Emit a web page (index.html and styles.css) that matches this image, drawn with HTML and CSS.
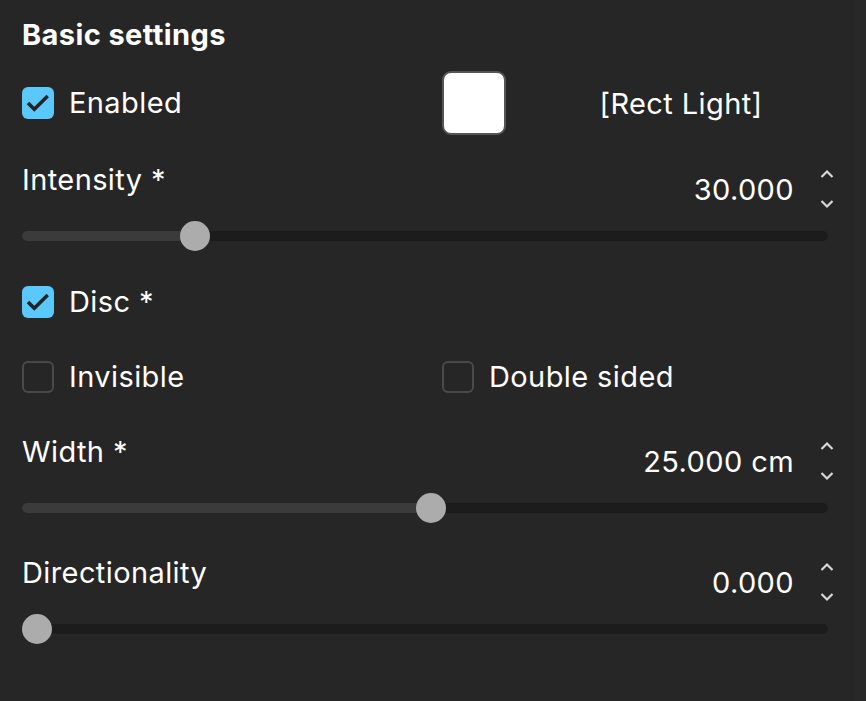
FILE: index.html
```html
<!DOCTYPE html>
<html lang="en">
<head>
    <meta charset="UTF-8">
    <title>Basic settings</title>
    <link rel="stylesheet" href="styles.css">
</head>
<body>
    <div class="panel">
        <h2 class="title">Basic settings</h2>

        <!-- Enabled / colour / name -->
        <div class="grid row-top">
            <label class="check">
                <span class="box checked">
                    <svg viewBox="0 0 32 32"><path d="M6 16 L12.3 22.3 L25.7 9"/></svg>
                </span>
                <span>Enabled</span>
            </label>
            <div class="color-cell">
                <span class="swatch"></span>
                <span class="name">[Rect Light]</span>
            </div>
        </div>

        <!-- Intensity -->
        <div class="prop prop-first">
            <div class="prop-head">
                <span class="prop-label">Intensity *</span>
                <div class="value-group">
                    <span class="value">30.000</span>
                    <span class="spin">
                        <svg viewBox="0 0 14 10"><path d="M1.5 8 L7 2.5 L12.5 8"/></svg>
                        <svg viewBox="0 0 14 10"><path d="M1.5 2 L7 7.5 L12.5 2"/></svg>
                    </span>
                </div>
            </div>
            <div class="slider" style="--v: 0.204">
                <div class="track"><div class="fill"></div></div>
                <div class="thumb"></div>
            </div>
        </div>

        <!-- Disc -->
        <div class="check-row row-disc">
            <label class="check">
                <span class="box checked">
                    <svg viewBox="0 0 32 32"><path d="M6 16 L12.3 22.3 L25.7 9"/></svg>
                </span>
                <span>Disc *</span>
            </label>
        </div>

        <!-- Invisible / Double sided -->
        <div class="grid check-row row-flags">
            <label class="check">
                <span class="box"></span>
                <span>Invisible</span>
            </label>
            <label class="check">
                <span class="box"></span>
                <span>Double sided</span>
            </label>
        </div>

        <!-- Width -->
        <div class="prop prop-width">
            <div class="prop-head">
                <span class="prop-label">Width *</span>
                <div class="value-group">
                    <span class="value">25.000 cm</span>
                    <span class="spin">
                        <svg viewBox="0 0 14 10"><path d="M1.5 8 L7 2.5 L12.5 8"/></svg>
                        <svg viewBox="0 0 14 10"><path d="M1.5 2 L7 7.5 L12.5 2"/></svg>
                    </span>
                </div>
            </div>
            <div class="slider" style="--v: 0.508">
                <div class="track"><div class="fill"></div></div>
                <div class="thumb"></div>
            </div>
        </div>

        <!-- Directionality -->
        <div class="prop">
            <div class="prop-head">
                <span class="prop-label">Directionality</span>
                <div class="value-group">
                    <span class="value">0.000</span>
                    <span class="spin">
                        <svg viewBox="0 0 14 10"><path d="M1.5 8 L7 2.5 L12.5 8"/></svg>
                        <svg viewBox="0 0 14 10"><path d="M1.5 2 L7 7.5 L12.5 2"/></svg>
                    </span>
                </div>
            </div>
            <div class="slider" style="--v: 0">
                <div class="track"><div class="fill"></div></div>
                <div class="thumb"></div>
            </div>
        </div>
    </div>
</body>
</html>
```

FILE: styles.css
```css
/* General */
html, body {
    margin: 0;
    padding: 0;
    height: 100%;
}

body {
    background: linear-gradient(to right, #262626 855px, #282828 855px);
    font-family: Inter, "Noto Sans", sans-serif;
    color: #fff;
    letter-spacing: 0.4px;
    overflow: hidden;
}

.panel {
    padding: 16px 32px 0 22px;
}

.title {
    margin: 0;
    font-size: 29px;
    font-weight: 700;
    line-height: 38px;
}

/* Two column rows */
.grid {
    display: grid;
    grid-template-columns: 420px 1fr;
    align-items: center;
}

.row-top {
    margin-top: 17px;
    height: 64px;
}

.check {
    display: flex;
    align-items: center;
    gap: 15px;
    font-size: 29px;
    line-height: 40px;
}

.box {
    width: 32px;
    height: 32px;
    box-sizing: border-box;
    border: 2px solid #4a4a4a;
    border-radius: 6px;
    flex-shrink: 0;
}

.box.checked {
    background-color: #5ac8fa;
    border: none;
}

.box svg {
    display: block;
    width: 32px;
    height: 32px;
    fill: none;
    stroke: #232323;
    stroke-width: 3.5;
}

.color-cell {
    display: flex;
    align-items: center;
}

.swatch {
    width: 64px;
    height: 64px;
    box-sizing: border-box;
    background: #fff;
    border: 2px solid #555;
    border-radius: 9px;
}

.name {
    flex: 1;
    text-align: center;
    font-size: 29px;
    padding-left: 22px;
}

/* Checkbox rows */
.check-row {
    height: 40px;
}

.row-disc {
    margin-top: 31px;
    display: flex;
    align-items: center;
}

.row-flags {
    margin-top: 35px;
}

/* Numeric properties */
.prop {
    margin-top: 35px;
}

.prop-first {
    margin-top: 30px;
}

.prop-width {
    margin-top: 40px;
}

.prop-head {
    display: flex;
    justify-content: space-between;
    height: 44px;
}

.prop-label {
    font-size: 29px;
    line-height: 30px;
}

.value-group {
    display: flex;
    align-items: center;
    align-self: flex-end;
    height: 40px;
    gap: 26px;
}

.value {
    font-size: 29px;
}

.spin {
    display: flex;
    flex-direction: column;
    justify-content: space-between;
    height: 40px;
    width: 14px;
}

.spin svg {
    display: block;
    width: 14px;
    height: 10px;
    fill: none;
    stroke: #d8d8d8;
    stroke-width: 2.2;
}

/* Slider */
.slider {
    position: relative;
    height: 30px;
    margin-top: 12px;
    margin-right: 6px;
    display: flex;
    align-items: center;
}

.track {
    flex: 1;
    height: 10px;
    border-radius: 5px;
    background-color: #1c1c1c;
    overflow: hidden;
}

.fill {
    height: 100%;
    width: calc(15px + var(--v) * (100% - 30px));
    background-color: #3b3b3b;
}

.thumb {
    position: absolute;
    top: 0;
    left: calc(var(--v) * (100% - 30px));
    width: 30px;
    height: 30px;
    border-radius: 50%;
    background-color: #acacac;
}
```
